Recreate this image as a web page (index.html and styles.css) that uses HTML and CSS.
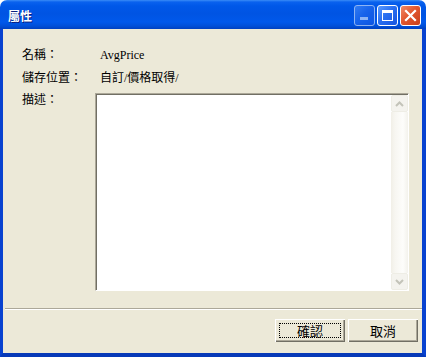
FILE: index.html
```html
<!DOCTYPE html>
<html lang="zh-Hant">
<head>
    <meta charset="UTF-8">
    <title>屬性</title>
    <link rel="stylesheet" href="styles.css">
</head>
<body>
    <div class="window">
        <div class="titlebar">
            <span class="title">屬性</span>
            <div class="caption-buttons">
                <div class="cap-btn cap-min disabled"><span class="min-bar"></span></div>
                <div class="cap-btn cap-max"><span class="max-box"></span></div>
                <div class="cap-btn cap-close">
                    <svg width="13" height="13" viewBox="0 0 13 13">
                        <path d="M2 2 L11 11 M11 2 L2 11" stroke="#fff" stroke-width="2.2" stroke-linecap="square"/>
                    </svg>
                </div>
            </div>
        </div>
        <div class="client">
            <div class="fields">
                <span class="label">名稱：</span>
                <span class="value latin">AvgPrice</span>
                <span class="label">儲存位置：</span>
                <span class="value">自訂/價格取得/</span>
                <span class="label">描述：</span>
                <div class="memo">
                    <div class="memo-text"></div>
                    <div class="scrollbar">
                        <div class="sb-btn">
                            <svg width="9" height="6" viewBox="0 0 9 6"><path d="M1 5 L4.5 1.5 L8 5" fill="none" stroke="#c3c3b9" stroke-width="2"/></svg>
                        </div>
                        <div class="sb-track"></div>
                        <div class="sb-btn">
                            <svg width="9" height="6" viewBox="0 0 9 6"><path d="M1 1 L4.5 4.5 L8 1" fill="none" stroke="#c3c3b9" stroke-width="2"/></svg>
                        </div>
                    </div>
                </div>
            </div>
            <div class="separator"></div>
            <div class="buttons">
                <button class="btn focused"><span>確認</span></button>
                <button class="btn"><span>取消</span></button>
            </div>
        </div>
    </div>
</body>
</html>
```

FILE: styles.css
```css
body {
    margin: 0;
    background-color: #ffffff;
    font-family: "Liberation Serif", "Noto Sans CJK TC", serif;
    font-size: 12px;
}

.window {
    width: 426px;
    height: 357px;
    display: flex;
    flex-direction: column;
}

.titlebar {
    height: 29px;
    flex-shrink: 0;
    display: flex;
    align-items: center;
    justify-content: space-between;
    padding: 0 5px 0 8px;
    box-sizing: border-box;
    border-radius: 7px 7px 0 0;
    background: linear-gradient(to bottom, #3a8cf7 0, #0a62ee 2px, #0058e8 6px, #0054e3 14px, #0058eb 22px, #004fd8 26px, #0040c0 29px);
}

.title {
    color: #ffffff;
    font-family: "Noto Sans CJK TC", sans-serif;
    font-weight: bold;
    font-size: 12px;
    text-shadow: 1px 1px 0 #0a1e80;
    margin-top: 1px;
}

.caption-buttons {
    display: flex;
    gap: 2px;
    margin-top: 2px;
}

.cap-btn {
    width: 21px;
    height: 21px;
    box-sizing: border-box;
    border: 1px solid #ffffff;
    border-radius: 3px;
    background: linear-gradient(135deg, #5a9bff 0%, #2a6ff0 45%, #1654e0 100%);
    display: flex;
    align-items: center;
    justify-content: center;
    position: relative;
}

.cap-min.disabled {
    opacity: 0.55;
}

.min-bar {
    position: absolute;
    left: 5px;
    bottom: 5px;
    width: 8px;
    height: 3px;
    background-color: #ffffff;
}

.max-box {
    width: 9px;
    height: 7px;
    border: 1px solid #ffffff;
    border-top-width: 3px;
}

.cap-close {
    background: linear-gradient(135deg, #f08a68 0%, #e2572f 45%, #c8401c 100%);
}

.client {
    flex: 1;
    background-color: #ece9d8;
    border-left: 3px solid #0842d0;
    border-right: 4px solid #0842d0;
    border-bottom: 4px solid #0739b8;
    display: flex;
    flex-direction: column;
}

.fields {
    display: grid;
    grid-template-columns: 73px 314px;
    grid-template-rows: 23px 22px auto;
    padding: 18px 0 0 19px;
    align-items: start;
}

.label,
.value {
    line-height: 16px;
    color: #000000;
}

.value {
    padding-left: 5px;
}

.latin {
    font-family: "Liberation Serif", serif;
}

.memo {
    height: 198px;
    margin-top: 1px;
    box-sizing: border-box;
    border-top: 1px solid #aca899;
    border-left: 1px solid #aca899;
    border-right: 1px solid #ffffff;
    border-bottom: 1px solid #ffffff;
    display: flex;
}

.memo-text {
    flex: 1;
    background-color: #ffffff;
    border-top: 1px solid #716f64;
    border-left: 1px solid #716f64;
}

.scrollbar {
    width: 17px;
    display: flex;
    flex-direction: column;
    background-color: #ffffff;
    border-top: 1px solid #716f64;
}

.sb-btn {
    height: 17px;
    box-sizing: border-box;
    border: 1px solid #eeede5;
    border-radius: 2px;
    background-color: #f4f3ee;
    display: flex;
    align-items: center;
    justify-content: center;
}

.sb-track {
    flex: 1;
    background: linear-gradient(to right, #f1efe7 0, #f7f6f1 4px, #fdfdfb 12px, #f3f2ec 17px);
}

.separator {
    margin: 17px 0 0 2px;
    height: 0;
    border-top: 1px solid #aca899;
    border-bottom: 1px solid #ffffff;
}

.buttons {
    display: flex;
    justify-content: flex-end;
    gap: 3px;
    padding: 9px 4px 0 0;
}

.btn {
    width: 70px;
    height: 23px;
    margin: 0;
    padding: 0;
    background-color: #ece9d8;
    border: none;
    box-shadow: inset 1px 1px 0 #ffffff, inset -1px -1px 0 #716f64, inset -2px -2px 0 #aca899;
    font-family: "Noto Sans CJK TC", sans-serif;
    font-size: 13px;
    color: #000000;
    display: flex;
    align-items: center;
    justify-content: center;
}

.btn.focused {
    outline: 1px dotted #000000;
    outline-offset: -5px;
}
```
